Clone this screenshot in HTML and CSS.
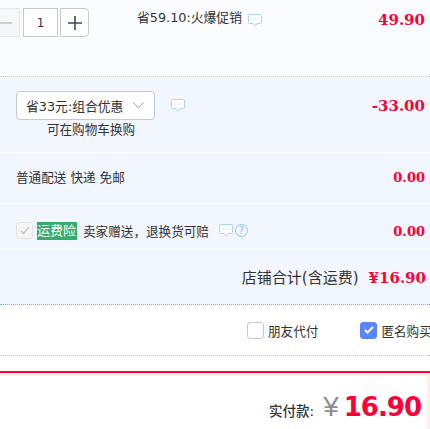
FILE: index.html
```html
<!DOCTYPE html>
<html lang="zh">
<head>
<meta charset="utf-8">
<title>确认订单</title>
<link rel="stylesheet" href="styles.css">
</head>
<body>
<main class="page">
  <section class="promo-row">
    <div class="qty">
      <button class="qty-btn qty-minus"><svg width="14" height="14" viewBox="0 0 14 14"><path d="M0 7h14" stroke="#c4c4c4" stroke-width="1.6"/></svg></button>
      <div class="qty-value">1</div>
      <button class="qty-btn qty-plus"><svg width="14" height="14" viewBox="0 0 14 14"><path d="M0 7h14M7 0v14" stroke="#3d4a57" stroke-width="1.6"/></svg></button>
    </div>
    <div class="promo-text">省59.10:火爆促销<svg class="bubble bubble-promo" width="14" height="13" viewBox="0 0 14 13"><path d="M1.5.5h11a1 1 0 0 1 1 1v7a1 1 0 0 1-1 1H9L7 12 5 9.500H1.500a1 1 0 0 1-1-1v-7a1 1 0 0 1 1-1z" fill="#fff" stroke="#a9d4f7"/><path d="M4 5h1M6.500 5h1M9 5h1" stroke="#a9d4f7"/></svg></div>
    <div class="price price-top">49.90</div>
  </section>

  <section class="combo-row">
    <div class="combo-left">
      <div class="combo-line">
        <div class="select"><span class="select-text">省33元:组合优惠</span><svg class="chev" width="11" height="7" viewBox="0 0 11 7"><path d="M.5.500 5.500 6l5-5.500" fill="none" stroke="#9aa0a8"/></svg></div>
        <svg class="bubble" width="14" height="13" viewBox="0 0 14 13"><path d="M1.500.5h11a1 1 0 0 1 1 1v7a1 1 0 0 1-1 1H9L7 12 5 9.500H1.500a1 1 0 0 1-1-1v-7a1 1 0 0 1 1-1z" fill="#fff" stroke="#a9d4f7"/><path d="M4 5h1M6.500 5h1M9 5h1" stroke="#a9d4f7"/></svg>
      </div>
      <div class="combo-note">可在购物车换购</div>
    </div>
    <div class="price">-33.00</div>
  </section>

  <section class="row row-ship">
    <div class="label">普通配送 快递 免邮</div>
    <div class="price price-small">0.00</div>
  </section>

  <section class="row row-insure">
    <div class="insure-left">
      <span class="check-off"><svg width="10" height="9" viewBox="0 0 10 9"><path d="M1 5l2.500 2.500L9 1" fill="none" stroke="#c8c8c8" stroke-width="1.600"/></svg></span>
      <span class="tag">运费险</span>
      <span class="insure-text">卖家赠送，退换货可赔</span>
      <svg class="bubble bubble-insure" width="14" height="13" viewBox="0 0 14 13"><path d="M1.500.5h11a1 1 0 0 1 1 1v7a1 1 0 0 1-1 1H9L7 12 5 9.500H1.500a1 1 0 0 1-1-1v-7a1 1 0 0 1 1-1z" fill="#fff" stroke="#a9d4f7"/><path d="M4 5h1M6.500 5h1M9 5h1" stroke="#a9d4f7"/></svg>
      <svg width="13" height="13" viewBox="0 0 13 13"><circle cx="6.500" cy="6.500" r="6" fill="none" stroke="#8cc4f2"/><text class="help-mark" x="6.500" y="10" text-anchor="middle">?</text></svg>
    </div>
    <div class="price price-small">0.00</div>
  </section>

  <section class="total-row">
    <span class="total-label">店铺合计(含运费)</span>
    <span class="price total-price">¥16.90</span>
  </section>

  <section class="options-row">
    <label class="option"><span class="box"></span>朋友代付</label>
    <label class="option"><span class="box box-on"><svg width="10" height="8" viewBox="0 0 10 8"><path d="M1 4l2.500 2.500L9 1" fill="none" stroke="#fff" stroke-width="2"/></svg></span>匿名购买</label>
  </section>

  <section class="pay-bar">
    <div class="pay-inner">
      <span class="pay-label">实付款:</span>
      <span class="pay-yen">¥</span>
      <span class="pay-amount">16.90</span>
    </div>
  </section>
</main>
</body>
</html>
```
FILE: styles.css
```css
* { box-sizing: border-box; }
html, body { margin: 0; padding: 0; background: #fff; }
body {
  width: 430px;
  height: 429px;
  overflow: hidden;
  font-family: "DejaVu Sans", "Noto Sans CJK SC", sans-serif;
  font-size: 12.6px;
  color: #333;
}
.page { display: flex; flex-direction: column; width: 430px; }
.price {
  font-family: "DejaVu Serif", serif;
  font-weight: 700;
  font-size: 15px;
  line-height: 20px;
  color: #ff0036;
}
.price-small { font-size: 13px; }
.promo-row {
  height: 77px;
  background: #fbfcff;
  border-bottom: 1px dotted #c8c8c8;
  display: flex;
  align-items: flex-start;
  padding: 8px 5px 0 0;
}
.qty { display: flex; margin-left: -10px; width: 99px; flex: none; }
.qty-btn, .qty-value {
  height: 29px;
  border: 1px solid #c4c8d0;
  background: #fff;
  padding: 0;
  display: flex;
  align-items: center;
  justify-content: center;
  font-size: 12px;
}
.qty-minus { width: 30px; background: #f6f7f9; border-color: #e4e6ea; border-radius: 3px 0 0 3px; }
.qty-value { width: 36px; margin: 0 2px 0 3px; }
.qty-plus { width: 29px; border-radius: 0 4px 4px 0; }
.promo-text {
  margin-left: 48px;
  font-size: 12.8px;
  line-height: 20px;
  display: flex;
  align-items: center;
  flex: 1;
}
.bubble-promo { margin: 4px 0 0 6px; }
.price-top { margin-top: 2px; }
.combo-row {
  height: 76px;
  background: #f2f6fe;
  border-bottom: 1px solid #fff;
  display: flex;
  justify-content: space-between;
  padding: 14px 5px 0 16px;
}
.combo-line { display: flex; align-items: center; gap: 16px; }
.select {
  width: 139px;
  height: 29px;
  background: #fff;
  border: 1px solid #c4c8d0;
  border-radius: 4px;
  display: flex;
  align-items: center;
  justify-content: space-between;
  padding: 0 10px 0 9px;
}
.select-text { font-size: 12.8px; white-space: nowrap; }
.combo-note { width: 150px; text-align: center; line-height: 18px; margin-top: 1px; }
.combo-row .price { margin-top: 5px; }
.row {
  display: flex;
  justify-content: space-between;
  align-items: center;
  background: #f2f6fe;
  padding: 0 5px 0 16px;
  border-bottom: 1px solid #fff;
}
.row-ship { height: 51px; padding-bottom: 4px; }
.row-ship .price { margin-top: 4px; }
.row-insure { height: 46px; padding-top: 8px; }
.row-insure .price { margin-top: 2px; }
.insure-left { display: flex; align-items: center; }
.check-off {
  width: 17px;
  height: 17px;
  margin-right: 4px;
  background: #f5f5f5;
  border: 1px solid #e4e4e4;
  border-radius: 3px;
  display: flex;
  align-items: center;
  justify-content: center;
}
.tag {
  width: 40px;
  height: 18px;
  background: #36ab6b;
  color: #fff;
  line-height: 18px;
  font-size: 13px;
  margin-right: 6px;
  white-space: nowrap;
}
.bubble-insure { margin: 0 2px 0 10px; }
.help-mark { font-size: 10px; fill: #8cc4f2; font-family: "DejaVu Sans", sans-serif; }
.total-row {
  height: 55px;
  background: #f2f6fe;
  border-bottom: 1px dotted #6aaefc;
  display: flex;
  justify-content: flex-end;
  align-items: flex-start;
  gap: 10px;
  padding: 18px 4px 0 0;
  line-height: 20px;
}
.total-label { font-size: 15px; white-space: nowrap; }
.options-row {
  height: 51px;
  border-bottom: 1px dotted #c8c8c8;
  display: flex;
  align-items: center;
  padding: 0 0 0 247px;
  gap: 42px;
  white-space: nowrap;
  overflow: hidden;
}
.option { display: flex; align-items: center; gap: 4px; }
.box {
  width: 17px;
  height: 17px;
  border: 1px solid #c4c8d0;
  border-radius: 3px;
  background: #fff;
  display: flex;
  align-items: center;
  justify-content: center;
}
.box-on { background: #5b85f8; border-color: #5b85f8; }
.pay-bar {
  margin-top: 15px;
  height: 58px;
  border-top: 2px solid #ff0036;
  padding: 3px 3px 0 0;
  background-color: #fdf0e8;
}
.pay-inner {
  background: #fff;
  height: 100%;
  display: flex;
  justify-content: flex-end;
  align-items: baseline;
  padding: 16px 6px 0 0;
}
.pay-label { font-weight: 500; font-size: 13.5px; margin-right: 9px; }
.pay-yen { font-family: "Liberation Sans", sans-serif; font-size: 28px; line-height: 30px; color: #8e8e8e; margin-right: 5px; }
.pay-amount { font-weight: 700; font-size: 26px; letter-spacing: -1px; color: #ff0036; }
```
